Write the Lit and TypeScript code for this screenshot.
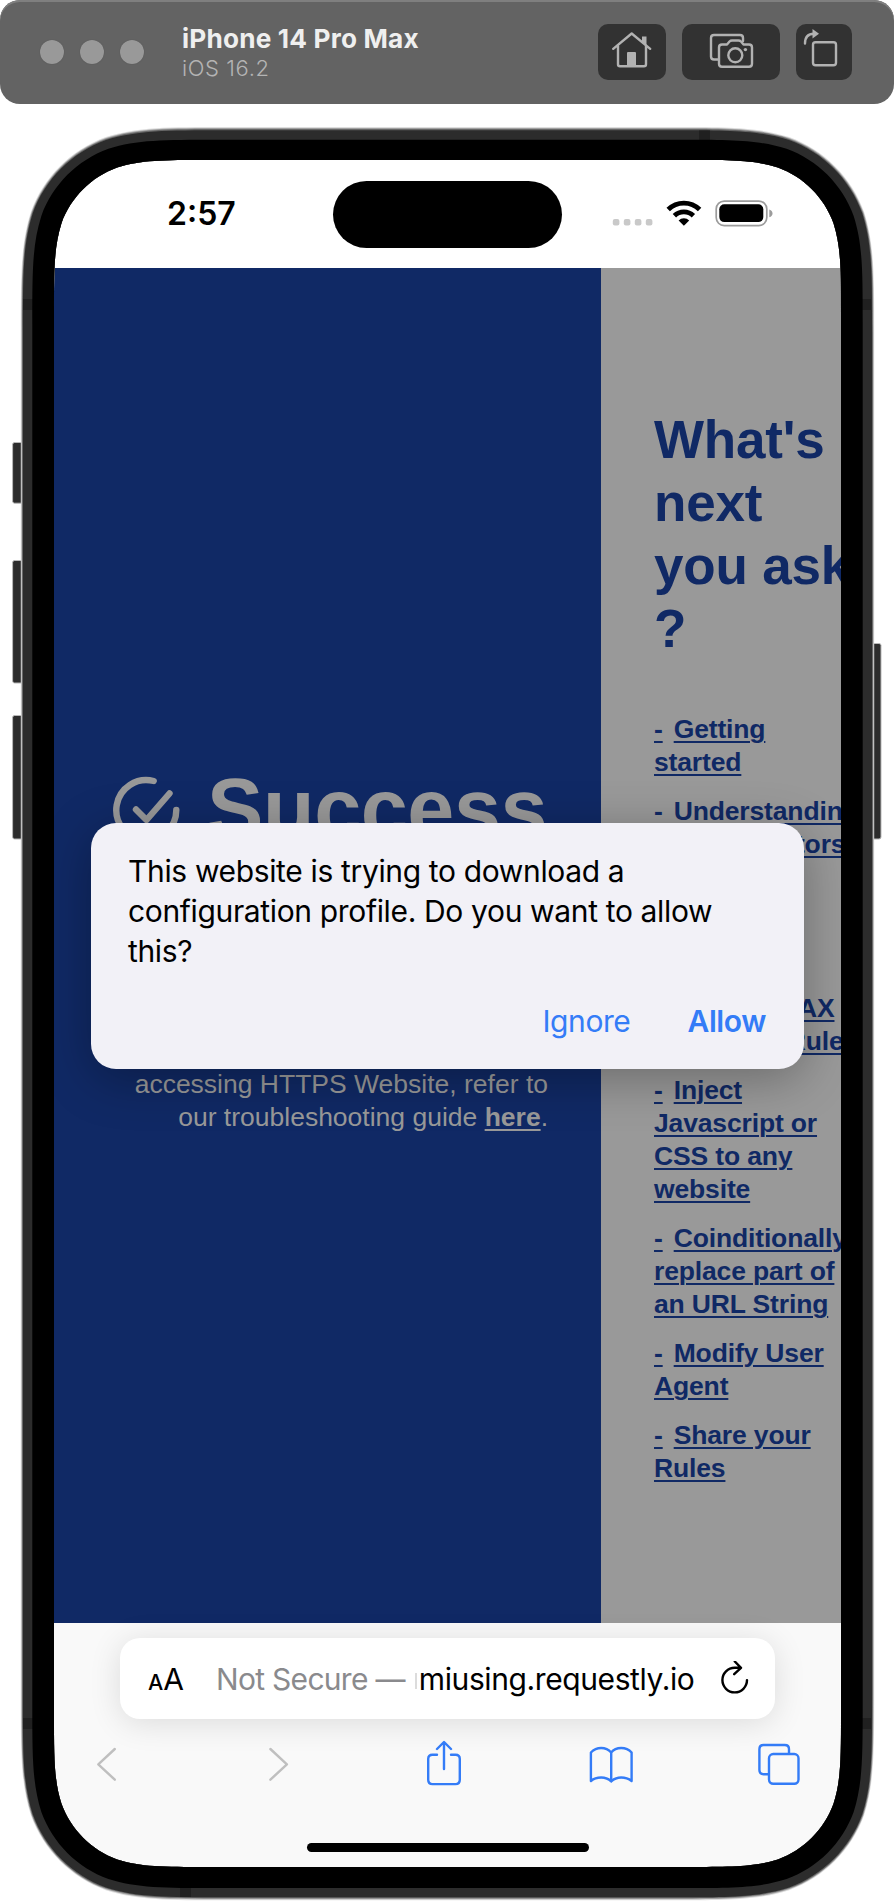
import { LitElement, html, svg, css } from "lit";
import { customElement } from "lit/decorators.js";

type Pt = [number, number];

/** Closed path of a rectangle with continuous-curvature corners. */
function squircle(x0: number, y0: number, x1: number, y1: number, r: number): string {
  const seg: Pt[] = [
    [1.528665, 0], [1.088493, 0], [0.868407, 0], [0.631494, 0.074911],
    [0.372824, 0.16906], [0.16906, 0.372824], [0.074911, 0.631494],
    [0, 0.868407], [0, 1.088493], [0, 1.528665],
  ];
  const back = [...seg].reverse();
  const corner = (pts: Pt[], cx: number, cy: number, sx: number, sy: number, cmd: string) => {
    const p = pts.map(([a, b]) => `${(cx + sx * a * r).toFixed(2)} ${(cy + sy * b * r).toFixed(2)}`);
    return `${cmd}${p[0]}C${p.slice(1, 4).join(" ")}C${p.slice(4, 7).join(" ")}C${p.slice(7, 10).join(" ")}`;
  };
  return (
    corner(seg, x0, y0, 1, 1, "M") +
    corner(back, x0, y1, 1, -1, "L") +
    corner(seg, x1, y1, -1, -1, "L") +
    corner(back, x1, y0, -1, 1, "L") +
    "Z"
  );
}

const SCREEN = squircle(54, 160, 841, 1867, 100);

@customElement("sim-toolbar")
class SimToolbar extends LitElement {
  static styles = css`
    :host { display: flex; align-items: center; box-sizing: border-box; height: 104px; padding: 0 42px 0 40px;
      background: #636363; border-radius: 20px; box-shadow: inset 0 2px 0 #7f7f7f;
      font-family: Inter, "Liberation Sans", sans-serif; }
    .lights { display: flex; gap: 16px; }
    .light { width: 24px; height: 24px; border-radius: 50%; background: #999; box-shadow: 0 0 1px #4a4a4a; }
    .titles { flex: 1; margin-left: 38px; padding-top: 2px; }
    .name { font-size: 26.200px; line-height: 30px; font-weight: 700; color: #efefef; letter-spacing: 0.180px; }
    .os { font-size: 22px; line-height: 29px; font-weight: 300; color: #b4b4b4; letter-spacing: 0.600px; }
    .buttons { display: flex; gap: 16px; }
    .btn { height: 56px; border-radius: 10px; background: #323232; }
    .btn svg { display: block; fill: none; stroke: #b2b2b2; stroke-width: 2.400; stroke-linejoin: round; stroke-linecap: round; }
    .btn .solid { fill: #b2b2b2; stroke: none; }
    .btn .cut { fill: #323232; }
  `;
  render() {
    return html`
      <div class="lights"><span class="light"></span><span class="light"></span><span class="light"></span></div>
      <div class="titles"><div class="name">iPhone 14 Pro Max</div><div class="os">iOS 16.2</div></div>
      <div class="buttons">
        <div class="btn"><svg width="68" height="56" viewBox="0 0 68 56">
          <path d="M15.200 24.800 33.700 9.500 52.200 24.800M20 22v18.200q0 2 2 2h24q2 0 2-2V22" />
          <path class="solid" d="M29 42V29q0-1 1-1h7q1 0 1 1v13zM44 12.500h4.500v10L44 18.500z" />
        </svg></div>
        <div class="btn"><svg width="98" height="56" viewBox="0 0 98 56">
          <path d="M61 17V14q0-3-3-3H32q-3 0-3 3v18.500q0 3 3 3h5" />
          <path class="cut" d="M40 20.500h5l2.500-3q1-1 2.500-1h6.500q1.500 0 2.500 1l2.500 3h5.500q3 0 3 3v16.200q0 3-3 3H40q-3 0-3-3V23.500q0-3 3-3z" />
          <circle cx="53.300" cy="31.300" r="7" /><circle class="solid" cx="63.400" cy="25.600" r="1.700" />
        </svg></div>
        <div class="btn"><svg width="56" height="56" viewBox="0 0 56 56">
          <rect x="17" y="18.300" width="23" height="23" rx="2.500" />
          <path d="M9 19.500C9 13 11.500 9.800 18 9.800" />
          <path class="solid" d="M16.500 5v9.500l6.500-4.700z" />
        </svg></div>
      </div>`;
  }
}

@customElement("status-bar")
class StatusBar extends LitElement {
  static styles = css`
    :host { display: flex; height: 108px; box-sizing: border-box; background: #fff; padding-top: 20.500px;
      font-family: Inter, "Liberation Sans", sans-serif; }
    .time { width: 279px; padding-left: 113px; box-sizing: border-box; font-size: 32px; font-weight: 600; line-height: 66px; letter-spacing: 0; color: #000; }
    .island { width: 229px; height: 67.500px; border-radius: 34px; background: #000; }
    .icons { display: block; margin-left: 48px; }
  `;
  render() {
    return html`
      <div class="time">2:57</div>
      <div class="island"></div>
      <svg class="icons" width="166" height="68" viewBox="610 180.500 166 68">
        ${[612.8, 623.8, 634.8, 645.8].map((x) => svg`<rect x=${x} y="218.500" width="6.600" height="6.600" rx="2" fill="#c9c9c9" />`)}
        <g fill="none" stroke="#000" stroke-width="4.800">
          <path d="M668.200 209a22.300 22.300 0 0 1 31.400 0" />
          <path d="M674.400 215.200a13.600 13.600 0 0 1 19 0" />
        </g>
        <path d="M683.900 225.300l-5.300-5.400a7.600 7.600 0 0 1 10.600 0z" />
        <rect x="716.200" y="200.600" width="50.600" height="24.500" rx="8" fill="none" stroke="#9c9c9c" stroke-width="1.700" />
        <rect x="719.300" y="203.800" width="44" height="17.800" rx="5" />
        <path d="M769.300 209q3.200 1.200 3.200 3.900t-3.200 3.900z" fill="#9c9c9c" />
      </svg>`;
  }
}

@customElement("web-page")
class WebPage extends LitElement {
  static styles = css`
    :host { display: flex; height: 1355px; overflow: hidden; background: #999;
      font-family: "Liberation Sans", Arial, sans-serif; color: #102965; }
    .left { flex: none; width: 547px; box-sizing: border-box; padding: 501px 53px 0 58px; background: #102965; color: #999; }
    .head { display: flex; align-items: center; height: 80px; }
    .check { display: block; flex: none; margin-right: 25px; }
    .success { font-size: 84.500px; font-weight: 700; line-height: 80px; letter-spacing: -0.400px; white-space: nowrap; }
    .note { margin-top: 219px; text-align: right; font-size: 26.500px; line-height: 33px; white-space: nowrap; }
    .here { font-weight: 700; text-decoration: underline; text-decoration-thickness: 2px; text-underline-offset: 3px; }
    .right { flex: none; width: 200px; padding: 140px 0 0 53px; white-space: nowrap; }
    .next { margin: 0; font-size: 53px; line-height: 63px; font-weight: 700; letter-spacing: -0.200px; }
    .links { display: flex; flex-direction: column; gap: 16px; margin-top: 53.300px; font-size: 26.500px; line-height: 33px; font-weight: 700; letter-spacing: -0.150px; }
    .link span { text-decoration: underline; text-decoration-thickness: 1.500px; text-underline-offset: 3px; }
    .dash { margin-right: 11px; }
  `;
  private links: string[][] = [
    ["Getting", "started"],
    ["Understanding", "Rules + Editors"],
    ["Redirect", "URL to any", "host"],
    ["Modify AJAX", "Response Rules"],
    ["Inject", "Javascript or", "CSS to any", "website"],
    ["Coinditionally", "replace part of", "an URL String"],
    ["Modify User", "Agent"],
    ["Share your", "Rules"],
  ];
  render() {
    return html`
      <section class="left">
        <div class="head">
          <svg class="check" width="70" height="70" viewBox="0 0 70 70" fill="none" stroke="#999" stroke-width="6.400" stroke-linecap="round" stroke-linejoin="round">
            <path d="M41.700 7A30 30 0 1 0 64.300 36" /><path d="M24 35.500 34.500 46 57.500 19.500" />
          </svg>
          <span class="success">Success</span>
        </div>
        <div class="note">accessing HTTPS Website, refer to<br />our troubleshooting guide <a class="here">here</a>.</div>
      </section>
      <section class="right">
        <h1 class="next">What's<br />next<br />you ask<br />?</h1>
        <div class="links">
          ${this.links.map((l) => html`<a class="link"><span class="dash">-</span>${l.map((t, i) => html`${i ? html`<br />` : ""}<span>${t}</span>`)}</a>`)}
        </div>
      </section>`;
  }
}

@customElement("profile-alert")
class ProfileAlert extends LitElement {
  static styles = css`
    :host { display: block; box-sizing: border-box; width: 713px; height: 246px; padding: 27.500px 38px 0 37px; border-radius: 25px;
      background: #f2f1f7; box-shadow: 0 10px 50px rgba(0, 0, 0, 0.3);
      font-family: Inter, "Liberation Sans", sans-serif; font-size: 30px; line-height: 40.200px; color: #000; }
    .msg { letter-spacing: -0.350px; white-space: nowrap; }
    .actions { display: flex; justify-content: flex-end; gap: 57px; margin-top: 30px; color: #347cf7; letter-spacing: -0.400px; }
    .allow { font-weight: 600; }
  `;
  render() {
    return html`
      <div class="msg">This website is trying to download a<br />configuration profile. Do you want to allow<br />this?</div>
      <div class="actions"><span class="ignore">Ignore</span><span class="allow">Allow</span></div>`;
  }
}

@customElement("safari-bar")
class SafariBar extends LitElement {
  static styles = css`
    :host { display: flex; flex-direction: column; align-items: center; height: 244px; background: #f9f9f9;
      font-family: Inter, "Liberation Sans", sans-serif; }
    .address { display: flex; align-items: center; box-sizing: border-box; width: 655px; height: 81px; margin-top: 15px; padding: 0 25px 0 28px;
      border-radius: 20px; background: #fff; box-shadow: 0 4px 32px rgba(0, 0, 0, 0.12); font-size: 30px; white-space: nowrap; }
    .small { font-size: 21.500px; font-weight: 500; }
    .aa { width: 68px; line-height: 40px; padding-top: 3px; }
    .secure { color: #8a8a8d; letter-spacing: -0.700px; }
    .sliver { width: 2px; height: 16px; margin: 4px 2px 0 10px; background: #dcdcdc; }
    .host { flex: 1; letter-spacing: -0.400px; }
    .tools { display: block; }
    .home { width: 282px; height: 9px; border-radius: 5px; background: #000; }
  `;
  render() {
    return html`
      <div class="address">
        <span class="aa"><span class="small">A</span>A</span>
        <span class="secure">Not Secure —</span><span class="sliver"></span><span class="host">miusing.requestly.io</span>
        <svg width="30" height="36" viewBox="720 1661.500 30 36" fill="none" stroke="#000" stroke-width="2.400" stroke-linecap="round" stroke-linejoin="round">
          <path d="M739.500 1668.300h-4.800a12.300 12.300 0 1 0 12.300 12.300M734.800 1662l6.200 6.300-6.800 6.400" />
        </svg>
      </div>
      <svg class="tools" width="787" height="124" viewBox="54 1719 787 124" fill="none" stroke="#347cf7" stroke-width="2.400" stroke-linecap="round" stroke-linejoin="round">
        <path stroke="#bfbfbf" d="M114.800 1749 98.300 1764.300 114.800 1779.700M270.400 1749 286.900 1764.300 270.400 1779.700" />
        <path d="M437 1754.800h-4.500q-4.300 0-4.300 4.300v20.700q0 4.300 4.300 4.300h23q4.300 0 4.300-4.300v-20.700q0-4.300-4.300-4.300H451M444 1769v-26M437 1749l7-7 7 7" />
        <path d="M611.200 1752.500q-4-4.500-10-4.500t-10.300 4.500v28.500q4-3.500 10.300-3.500t10 4q4-4 10-4t10.400 3.500v-28.500q-4-4.500-10.400-4.500t-10 4.500zv28.500" />
        <path d="M768 1774.300h-4.400q-4.200 0-4.200-4.200v-20.900q0-4.200 4.200-4.200h21.200q4.200 0 4.200 4.200v4.600" /><rect x="769" y="1754" width="29.500" height="29.800" rx="4.200" />
      </svg>
      <div class="home"></div>`;
  }
}

@customElement("app-root")
class AppRoot extends LitElement {
  static styles = css`
    :host { display: block; position: relative; width: 894px; height: 1904px; overflow: hidden; background: #fff; }
    .screen { width: 787px; height: 1707px; margin: 56px 0 0 54px; position: relative; }
    .alert-clip { position: absolute; inset: 108px 0 244px; overflow: hidden; }
    .alert { position: absolute; left: 37px; top: 555px; }
    .frame { position: absolute; left: 0; top: 104px; pointer-events: none; }
  `;
  render() {
    const ring = (dx: number, top: number, bottom: number, r: number, fill: string) =>
      svg`<path fill-rule="evenodd" fill=${fill} d=${squircle(54.3 - dx, 160 - top, 840.7 + dx, 1867 + bottom, r) + SCREEN} />`;
    const key = (x: number, y: number, w: number, h: number) => svg`
      <rect x=${x} y=${y} width=${w} height=${h} rx="2" fill="#2c2c2c" stroke="#b8b8b8" stroke-width="1" />`;
    const seam = (x: number, y: number, w: number, h: number) => svg`<rect x=${x} y=${y} width=${w} height=${h} fill="#202020" />`;
    return html`
      <sim-toolbar></sim-toolbar>
      <div class="screen">
        <status-bar></status-bar>
        <web-page></web-page>
        <safari-bar></safari-bar>
        <div class="alert-clip"><profile-alert class="alert"></profile-alert></div>
      </div>
      <svg class="frame" width="894" height="1800" viewBox="0 104 894 1800">
        <path fill="#fff" fill-rule="evenodd" d=${"M0 104H894V1904H0Z" + SCREEN} />
        ${key(12.6, 442.5, 12, 60.7)}${key(12.6, 560.5, 12, 122.5)}${key(12.6, 715.5, 12, 123.5)}${key(869, 643.5, 12, 195.5)}
        ${ring(33.5, 33, 33.3, 134.5, "#dedede")}${ring(32.8, 32, 32.3, 133.5, "#a0a0a0")}${ring(32.1, 31, 31.3, 132.5, "#666")}${ring(31.4, 29.8, 30.3, 131.5, "#2c2c2c")}
        ${seam(23, 299, 10, 11)}${seam(861, 299, 10, 11)}${seam(699, 130.5, 11, 10)}
        ${seam(23, 1718, 10, 11)}${seam(861, 1718, 10, 11)}${seam(180, 1887, 11, 10)}
        ${ring(22, 20.2, 21, 120.5, "#000")}
      </svg>`;
  }
}
